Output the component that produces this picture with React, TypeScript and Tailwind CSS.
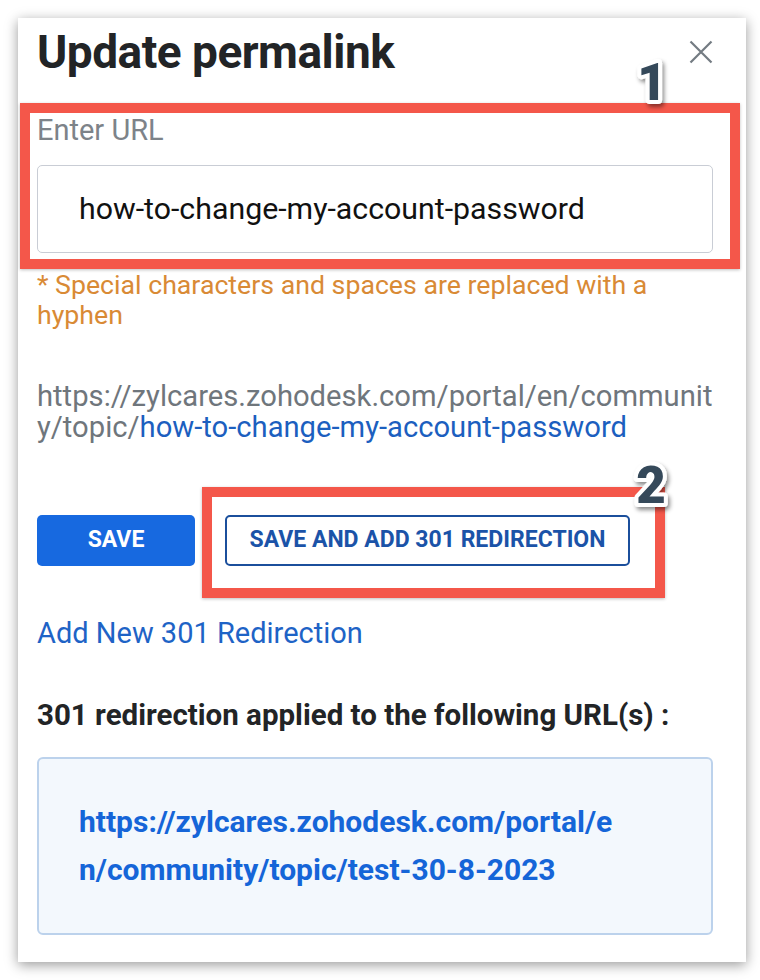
import React from 'react';

const Badge: React.FC<{ label: string; className: string }> = ({ label, className }) => (
    <svg className={`absolute ${className}`} width="60" height="64" viewBox="0 0 60 64">
        <defs>
            <filter id={`badge-shadow-${label}`} x="-30%" y="-30%" width="160%" height="160%">
                <feDropShadow dx="2" dy="3" stdDeviation="2" floodColor="#000" floodOpacity="0.45" />
            </filter>
        </defs>
        <text
            x="30"
            y="52"
            textAnchor="middle"
            fontFamily="Roboto, 'Liberation Sans', sans-serif"
            fontWeight="900"
            fontSize="51"
            fill="#34485a"
            stroke="#ffffff"
            strokeWidth="8"
            strokeLinejoin="round"
            paintOrder="stroke"
            filter={`url(#badge-shadow-${label})`}
        >
            {label}
        </text>
    </svg>
);

const App: React.FC = () => {
    return (
        <div className="min-h-screen bg-white p-[18px] font-['Roboto','Liberation_Sans',sans-serif]">
            <div className="relative w-[728px] h-[944px] bg-white pl-[19px] pr-[33px] shadow-[0_3px_12px_rgba(0,0,0,0.4)]">
                {/* header */}
                <div className="flex items-start justify-between pt-[7px]">
                    <h1 className="text-[46px] leading-[54px] font-bold text-[#222426] tracking-[-0.5px]">Update permalink</h1>
                    <button className="mt-[15px] text-[#737b82]">
                        <svg width="24" height="24" viewBox="0 0 24 24" fill="none" stroke="currentColor" strokeWidth="2.2">
                            <path d="M1.5 1.5L22.5 22.5M22.5 1.5L1.5 22.5" />
                        </svg>
                    </button>
                </div>

                {/* url field, highlighted */}
                <div className="mt-[24px] -ml-[17px] w-[720px] border-[10px] border-[#f4574a] pl-[7px] pr-[17px] pt-[1px] pb-[6px] shadow-[0_1px_3px_rgba(0,0,0,0.25)]">
                    <div className="text-[29px] leading-[32px] text-[#7d8389]">Enter URL</div>
                    <div className="mt-[19px] h-[88px] flex items-center rounded-[5px] border border-[#c9cdd5] pl-[41px] text-[30.3px] text-[#111]">
                        how-to-change-my-account-password
                    </div>
                </div>

                <p className="mt-[1px] text-[26.7px] leading-[30px] text-[#d98a35]">
                    * Special characters and spaces are replaced with a<br />hyphen
                </p>

                <p className="mt-[51px] text-[29.2px] leading-[31px] text-[#6f767c]">
                    https://zylcares.zohodesk.com/portal/en/communit<br />
                    y/topic/<span className="text-[#1c5fbf]">how-to-change-my-account-password</span>
                </p>

                {/* action buttons */}
                <div className="mt-[44px] flex items-start">
                    <button className="mt-[28px] w-[158px] h-[51px] rounded-[5px] bg-[#1769e0] text-white text-[23px] font-bold">
                        SAVE
                    </button>
                    <div className="ml-[7px] border-[10px] border-[#f4574a] pl-[13px] pr-[25px] pt-[18px] pb-[22px] shadow-[0_1px_3px_rgba(0,0,0,0.25)]">
                        <button className="w-[405px] h-[51px] rounded-[5px] border-2 border-[#1b4f9c] text-[#1b53a8] text-[23px] font-bold">
                            SAVE AND ADD 301 REDIRECTION
                        </button>
                    </div>
                </div>

                <a className="block mt-[19px] text-[29px] leading-[32px] text-[#1e63c6]">Add New 301 Redirection</a>

                <h2 className="mt-[50px] text-[29.5px] leading-[32px] font-bold text-[#222426]">
                    301 redirection applied to the following URL(s) :
                </h2>

                <div className="mt-[26px] h-[178px] rounded-[6px] border-2 border-[#bcd2ec] bg-[#f3f8fd] pl-[40px] pt-[39px]">
                    <a className="block text-[30px] leading-[48px] font-bold text-[#1565d8]">
                        https://zylcares.zohodesk.com/portal/e<br />n/community/topic/test-30-8-2023
                    </a>
                </div>

                <Badge label="1" className="left-[604px] top-[30px]" />
                <Badge label="2" className="left-[603px] top-[433px]" />
            </div>
        </div>
    );
};

export default App;
